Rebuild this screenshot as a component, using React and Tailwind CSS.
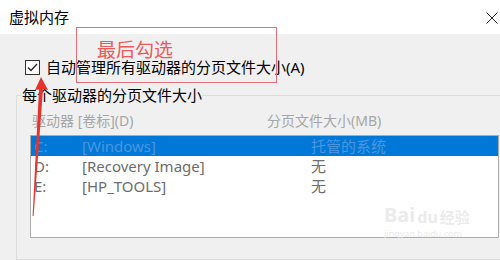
const rows = [
  { drive: "C:", label: "[Windows]", size: "托管的系统", selected: true },
  { drive: "D:", label: "[Recovery Image]", size: "无" },
  { drive: "E:", label: "[HP_TOOLS]", size: "无" },
];

const font = { fontFamily: '"Noto Sans", "Noto Sans CJK SC", sans-serif' };

export default function App() {
  return (
    <div
      className="relative w-[500px] h-[260px] overflow-hidden flex flex-col bg-[#f0f0f0] text-black"
      style={font}
    >
      {/* Title bar */}
      <div className="h-[34px] shrink-0 bg-white flex items-center justify-between pl-[9px] pr-[2px]">
        <span className="text-[15px] leading-none">虚拟内存</span>
        <svg width="12" height="12" viewBox="0 0 12 12" className="mb-[-1px]">
          <path d="M0.5 0.5 L11.5 11.5 M11.5 0.5 L0.5 11.5" stroke="#222" strokeWidth="1" fill="none" />
        </svg>
      </div>

      {/* Body */}
      <div className="flex-1 flex flex-col pt-[26px]">
        <label className="flex items-center gap-[6px] pl-[25px] h-[15px]">
          <span className="w-[15px] h-[15px] border border-[#333] bg-white flex items-center justify-center">
            <svg width="11" height="9" viewBox="0 0 11 9">
              <path d="M1 4.5 L4 7.5 L10 1" stroke="#222" strokeWidth="1.3" fill="none" />
            </svg>
          </span>
          <span className="text-[15px] leading-none">自动管理所有驱动器的分页文件大小(A)</span>
        </label>

        <fieldset className="mt-[10px] ml-[16px] -mr-[10px] border border-[#dcdcdc] pl-[13px] pr-[11px] flex-1 min-h-0">
          <legend className="-ml-[8px] px-0 text-[15px] leading-[20px]">每个驱动器的分页文件大小</legend>
          <div className="flex text-[14px] text-[#a6a6a6] h-[30px] items-center pl-[2px]">
            <span className="w-[235px]">驱动器 [卷标](D)</span>
            <span>分页文件大小(MB)</span>
          </div>
          <div className="w-[469px] h-[103px] bg-white border border-[#acacac] text-[15px]">
            {rows.map((r) => (
              <div
                key={r.drive}
                className={
                  "flex h-[20px] items-center leading-none pl-[3px] " +
                  (r.selected ? "bg-[#0078d7] text-[#4a96e0]" : "text-[#6d6d6d]")
                }
              >
                <span className="w-[48px]">{r.drive}</span>
                <span className="w-[229px]">{r.label}</span>
                <span>{r.size}</span>
              </div>
            ))}
          </div>
        </fieldset>
      </div>

      {/* Annotation box */}
      <div className="absolute left-[76px] top-[27px] w-[201px] h-[56px] border border-[#e0707c]">
        <span className="absolute left-[20px] top-[13px] text-[19px] leading-none text-[#ee5a5a]">最后勾选</span>
      </div>

      {/* Watermark */}
      <div className="absolute left-[384px] top-[205px] flex items-end gap-[2px] text-[#ebebeb] font-bold">
        <span className="text-[20px] leading-none">Bai</span>
        <span className="text-[16px] leading-none">du</span>
        <span className="text-[15px] leading-none">经验</span>
      </div>
      <div className="absolute left-[384px] top-[229px] text-[9px] leading-none text-[#ebebeb]">jingyan.baidu.com</div>

      {/* Red arrow */}
      <svg className="absolute left-0 top-0" width="500" height="260" viewBox="0 0 500 260">
        <path
          d="M41 77 L48 90 L43 89 L33.6 216 L32.6 216 L39 89.5 L35 90 Z"
          fill="#e8322c"
        />
      </svg>
    </div>
  );
}
